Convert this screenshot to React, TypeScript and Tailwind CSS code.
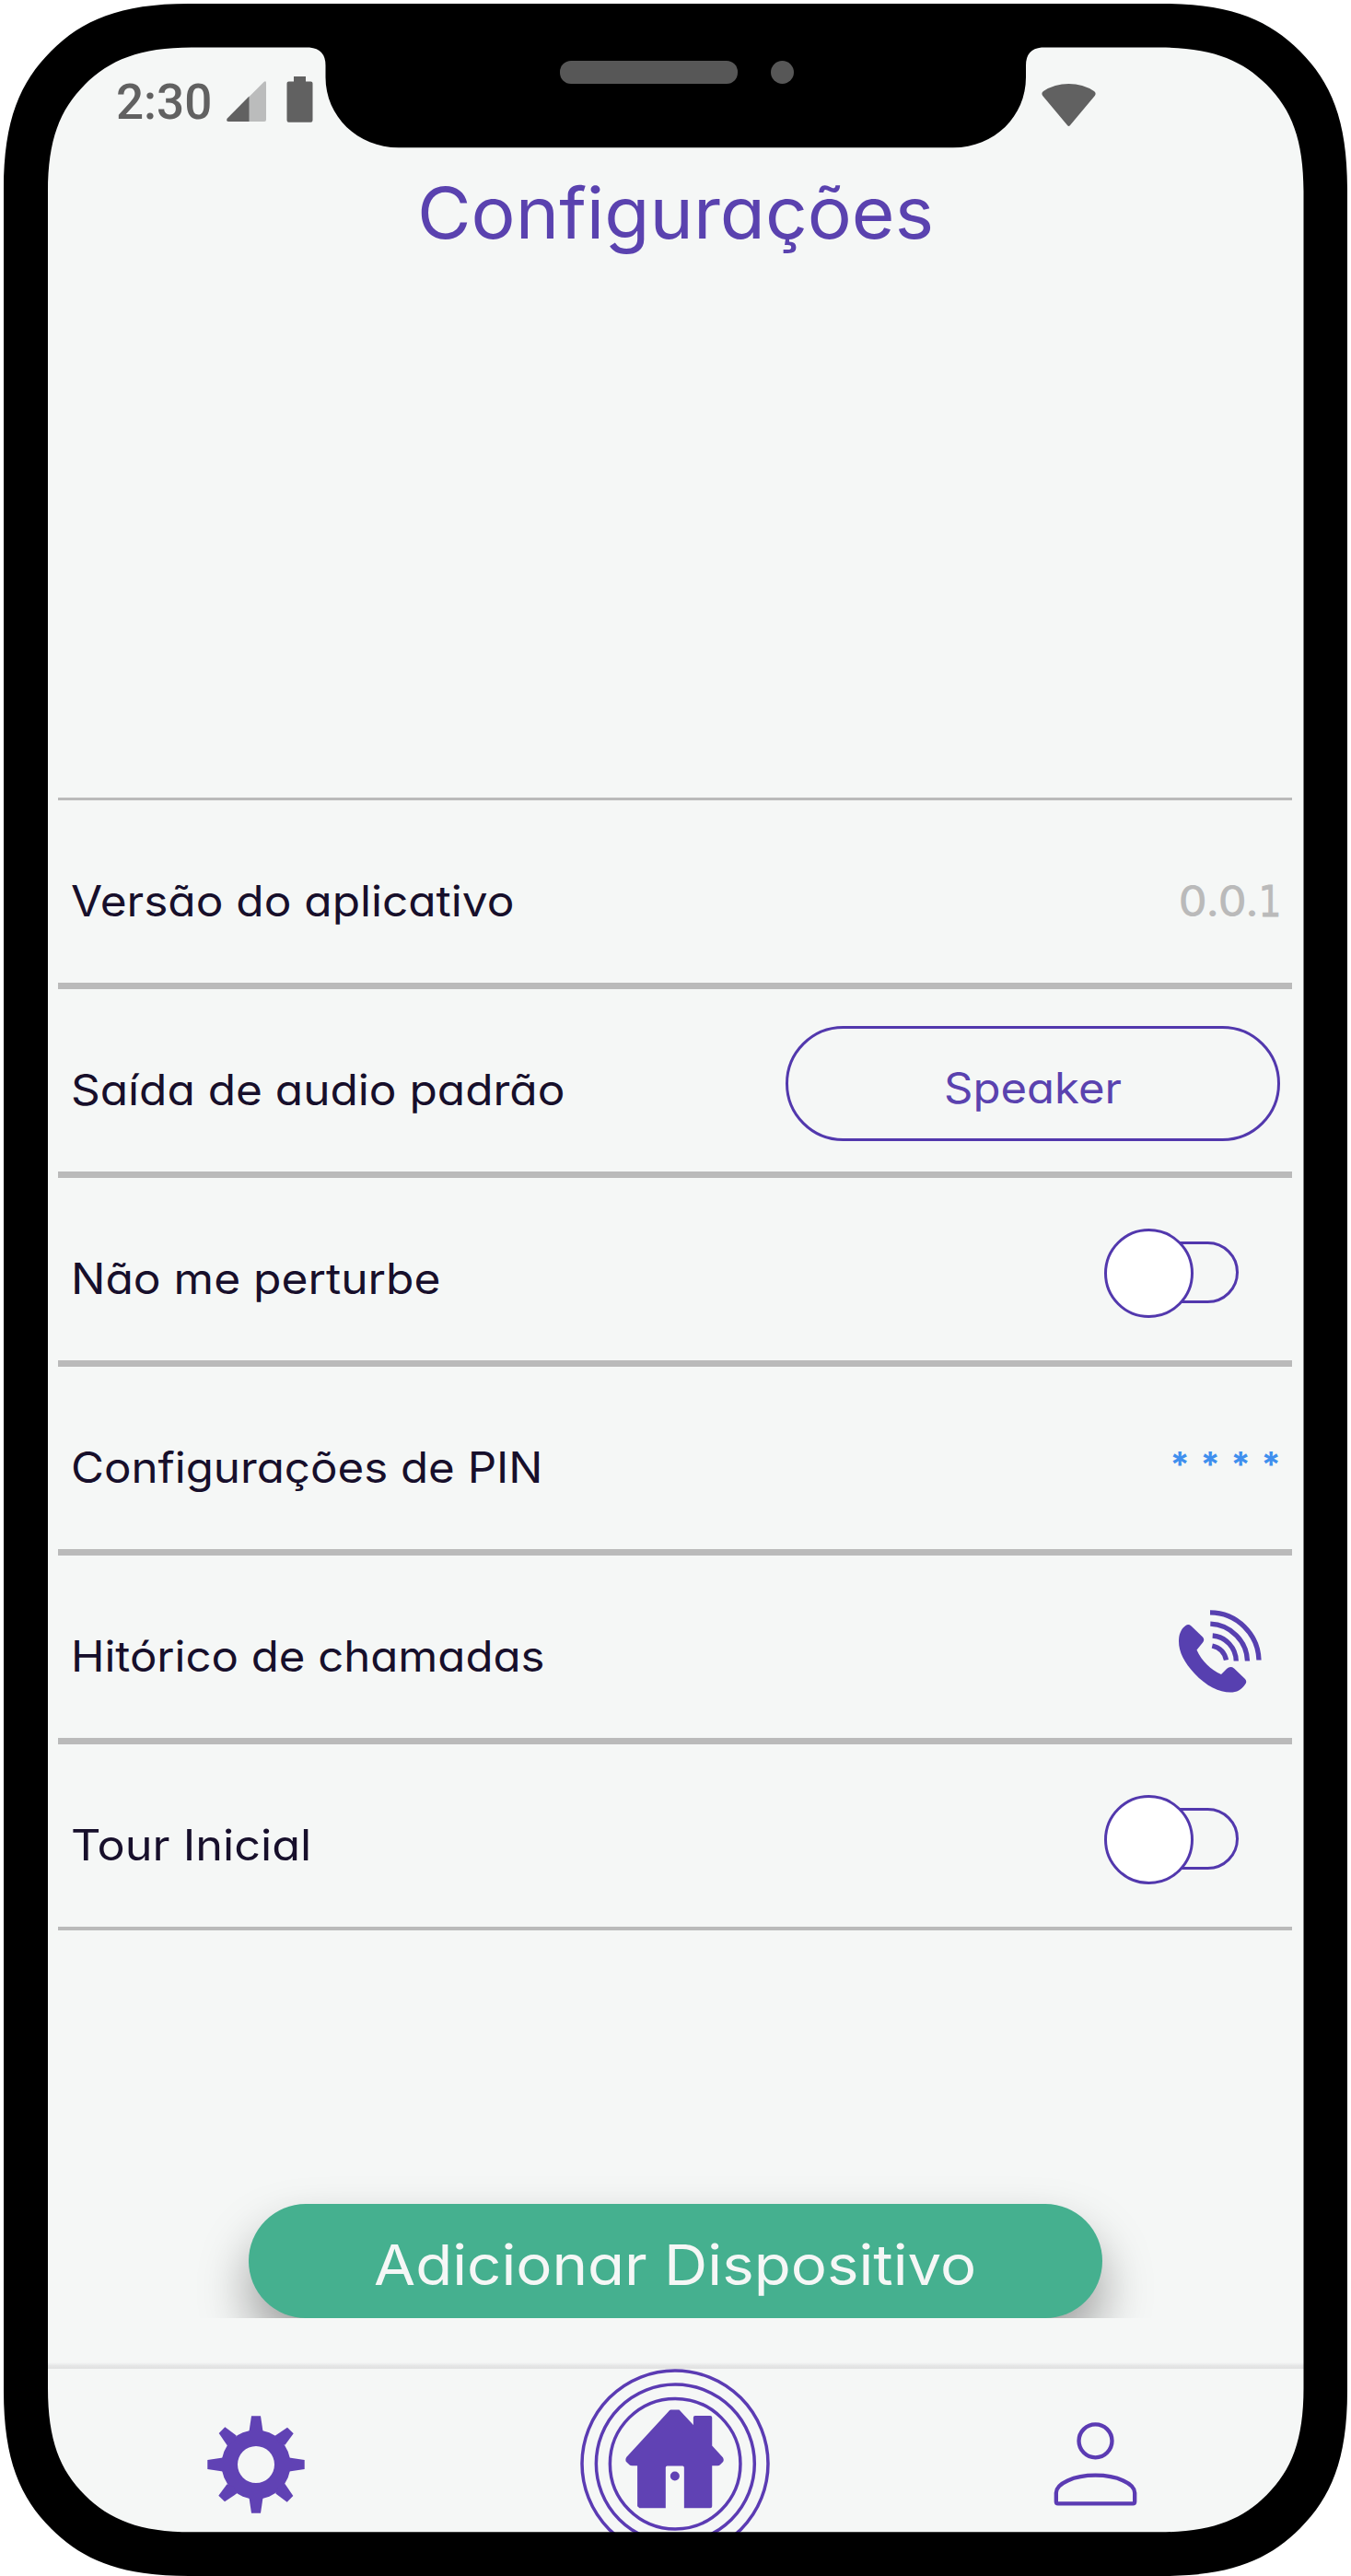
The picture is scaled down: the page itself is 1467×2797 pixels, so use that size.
import type { ReactNode } from "react";

function SignalIcon() {
  return (
    <svg className="mt-[88px] ml-[18px] h-[44px] w-[43px] shrink-0" viewBox="0 0 43 44">
      <path d="M40.5 1 Q43 -1 43 2 V42 Q43 44 41 44 H24 V17.5 Z" fill="#bbbcbc" />
      <path d="M24.5 16.5 V44 H2.5 Q-1 44 0.8 40.5 Z" fill="#616161" />
    </svg>
  );
}

function BatteryIcon() {
  return (
    <svg className="mt-[83px] ml-[22px] h-[50px] w-[29px] shrink-0" viewBox="0 0 29 50">
      <path d="M8 0 H21 V5.5 H26.5 Q28.5 5.5 28.5 7.5 V47.5 Q28.5 49.7 26.5 49.7 H2.5 Q0.5 49.7 0.5 47.5 V7.5 Q0.5 5.5 2.5 5.5 H8 Z" fill="#616161" />
    </svg>
  );
}

function WifiIcon() {
  return (
    <svg className="mt-[91px] ml-[791px] h-[46px] w-[59px] shrink-0" viewBox="0 0 59 46">
      <path d="M1.2 13 Q-0.8 10 2 8 Q14 0 29.5 0 T57 8 Q59.8 10 57.8 13 L31 45 Q29.5 46.8 28 45 Z" fill="#616161" />
    </svg>
  );
}

function CallIcon() {
  return (
    <svg className="mt-[9px] mr-[33px] size-[90px]" viewBox="0 0 90 90" fill="none" stroke="#5740b0" strokeWidth="5.3">
      <path
        d="M0 34 C0 26 3 20 7.5 17 Q10.5 15 13.5 17.5 L26 29.5 Q28.5 32.5 26 35.5 L19.5 43.5 C25 56 35 65 46 70 L52 64 Q56 60.5 60 63.5 L72 75 Q74.5 78 72 81 C68 87 63 89.5 56 89.5 C44 89.5 30 83 17 69 C6 57 0 46 0 34 Z"
        fill="#5740b0"
        stroke="none"
      />
      <path d="M34 2.8 C63 3 86 26 87 54.5" />
      <path d="M34.3 15.2 C56 16 74 34 74.5 55.5" />
      <path d="M36.7 28 C51 29 62 41 62.3 55.5" />
      <path d="M36.3 39 C45 41 50 47 51.5 54.5" />
    </svg>
  );
}

function Toggle() {
  return (
    <div className="relative mt-[11px] mr-[58px] h-[99px] w-[146px]">
      <div className="absolute top-[14px] right-0 h-[67px] w-[110px] rounded-full border-[3px] border-[#5238ad]" />
      <div className="absolute top-0 left-0 size-[97px] rounded-full border-[3px] border-[#5238ad] bg-white" />
    </div>
  );
}

function Row({ label, stretch, children }: { label: string; stretch: string; children: ReactNode }) {
  return (
    <div className="flex h-[205px] items-center justify-between border-t-[3px] border-b-[4px] border-[#bababa]">
      <span className={`${stretch} mt-[19px] ml-[14px] origin-left text-[46px] leading-none whitespace-nowrap text-[#170f2b]`}>
        {label}
      </span>
      {children}
    </div>
  );
}

function GearIcon() {
  return (
    <svg className="mt-[51px] size-[106px]" viewBox="-53 -53 106 106" fill="#6042b4">
      <path
        fillRule="evenodd"
        d="M-37.5 0 A37.5 37.5 0 1 0 37.5 0 A37.5 37.5 0 1 0 -37.5 0 Z M-20 0 A20 20 0 1 1 20 0 A20 20 0 1 1 -20 0 Z"
      />
      {[0, 90, 180, 270].map((a) => (
        <g key={a} transform={`rotate(${a})`}>
          <path d="M-5 -52.7 H5 L7.5 -36 H-7.5 Z" />
          <path d="M-33.7 -40.7 L-40.3 -34 L-31.3 -20.7 L-24 -24 L-21.3 -31.5 Z" />
        </g>
      ))}
    </svg>
  );
}

function HomeIcon() {
  return (
    <svg className="mr-[2px] h-[206px] w-[206px] shrink-0" viewBox="151 96 617 617" fill="none" stroke="#5b3bb3" strokeWidth="10.5">
      <circle cx="459.5" cy="404.5" r="302.5" />
      <circle cx="460.5" cy="404.5" r="257.5" />
      <circle cx="460" cy="405" r="212" />
      <path
        d="M445 229 H473 L519 279 V255 Q519 249 525 249 H574 Q580 249 580 255 V346 L615 384 Q620 393 615 399 L606 408 Q603 411 598 411 H580 V543 Q580 549 574 549 H489 V417 Q489 412 484 412 H434 Q429 412 429 417 V549 H344 L337 543 V411 H320 Q314 411 311 408 L300 398 Q297 390 302 383 L438 235 Q441 230 445 229 Z"
        fill="#6042b4"
        stroke="none"
      />
      <circle cx="459" cy="445" r="15" fill="#6042b4" stroke="none" />
    </svg>
  );
}

function PersonIcon() {
  return (
    <svg className="mt-[58px] h-[91px] w-[91px]" viewBox="432 390 272 273" fill="none" stroke="#5b3bb3" strokeWidth="13">
      <circle cx="568" cy="451" r="54" />
      <path d="M440 620 C440 590 497 563 568 563 C639 563 696 590 696 620 V649 Q696 655 690 655 H446 Q440 655 440 649 Z" />
    </svg>
  );
}

const BODY =
  "M4 205 C4 130 22 89 55.5 55.5 C89 22 130 4 205 4 H1262 C1337 4 1378 22 1411.5 55.5 C1445 89 1463 130 1463 205 V2596 C1463 2671 1445 2712 1411.5 2745.5 C1378 2779 1337 2797 1262 2797 H205 C130 2797 89 2779 55.5 2745.5 C22 2712 4 2671 4 2596 Z";

const SCREEN =
  "M52 208 C52 152 65 119 92 92 C119 65 152 51.5 208 51.5 H336 Q353.5 53 353.5 71 V84 C353.5 126 388 160.3 433 160.3 H1035 C1080 160.3 1114 126 1114 84 V71 Q1114 53 1131 51.5 H1259.5 C1315.5 51.5 1348.5 65 1375.5 92 C1402.5 119 1415.5 152 1415.5 208 V2593 C1415.5 2649 1402.5 2682 1375.5 2709 C1348.5 2736 1315.5 2749.3 1259.5 2749.3 H208 C152 2749.3 119 2736 92 2709 C65 2682 52 2649 52 2593 Z";

/* Device bezel: white outside the body, black ring with notch, speaker and camera. */
function Bezel() {
  return (
    <svg className="pointer-events-none absolute inset-0 h-[2797px] w-[1467px]" viewBox="0 0 1467 2797">
      <path fillRule="evenodd" fill="#fff" d={`M0 0 H1467 V2797 H0 Z ${BODY}`} />
      <path fillRule="evenodd" d={`${BODY} ${SCREEN}`} />
      <rect x="608" y="66" width="193" height="25" rx="12" fill="#575757" />
      <circle cx="849.5" cy="78.5" r="12.5" fill="#575757" />
    </svg>
  );
}

export default function App() {
  return (
    <div className="relative h-[2797px] w-[1467px] overflow-hidden bg-[#f5f7f6] font-['Inter',sans-serif] font-[430] [font-feature-settings:'cv11']">
      <div className="flex h-[181px] items-start pl-[126px]">
        <span className="mt-[84px] w-[102px] font-['Roboto',sans-serif] text-[53px] leading-[54px] font-medium whitespace-nowrap text-[#616161]">2:30</span>
        <SignalIcon />
        <BatteryIcon />
        <WifiIcon />
      </div>

      <h1 className="h-[100px] scale-x-[1.042] text-center text-[77px] leading-[100px] text-[#5a42af]">Configurações</h1>

      <div className="mt-[585px] ml-[63px] w-[1340px]">
        <Row label="Versão do aplicativo" stretch="scale-x-[1.077]">
          <span className="mt-[21px] mr-[15px] flex origin-right scale-x-[1.04] items-baseline text-[46px] leading-none font-medium text-[#bababa]">
            0.0.
            <span className="-mr-[3px] -ml-[6px] inline-block origin-right scale-x-[0.82] font-['DejaVu_Sans',sans-serif] leading-none font-normal [-webkit-text-stroke:0.8px_#bababa]">1</span>
          </span>
        </Row>
        <Row label="Saída de audio padrão" stretch="scale-x-[1.077]">
          <button className="mt-[6px] mr-[13px] h-[125px] w-[537px] rounded-full border-[3px] border-[#5238ad] pt-[10px] text-[46px] leading-none text-[#5a42af]">
            <span className="inline-block scale-x-[1.065]">Speaker</span>
          </button>
        </Row>
        <Row label="Não me perturbe" stretch="scale-x-[1.08]">
          <Toggle />
        </Row>
        <Row label="Configurações de PIN" stretch="scale-x-[1.07]">
          <div className="mt-[14px] mr-[14px] flex gap-[15px] text-[38px] leading-none font-bold text-[#3f8fee]">
            {[0, 1, 2, 3].map((i) => (
              <span key={i} className="flex w-[18px] justify-center">*</span>
            ))}
          </div>
        </Row>
        <Row label="Hitórico de chamadas" stretch="scale-x-[1.067]">
          <CallIcon />
        </Row>
        <Row label="Tour Inicial" stretch="scale-x-[1.095]">
          <Toggle />
        </Row>
      </div>

      <div className="mt-[246px] flex h-[175px] justify-center overflow-hidden pt-[51px]">
        <button className="h-[124px] w-[927px] rounded-full bg-[#45b08f] pt-[8px] text-[61px] leading-none text-[#f5f7f6] shadow-[0_30px_54px_rgba(0,0,0,0.36)]">
          <span className="inline-block scale-x-[1.072]">Adicionar Dispositivo</span>
        </button>
      </div>

      <div className="mt-[48px] h-[7px] bg-linear-to-b from-[#f5f7f6] via-[#e6e7e7] to-[#e0e1e1]" />
      <nav className="grid h-[225px] grid-cols-[456px_456px_456px] justify-center justify-items-center">
        <GearIcon />
        <HomeIcon />
        <PersonIcon />
      </nav>
      <Bezel />
    </div>
  );
}
